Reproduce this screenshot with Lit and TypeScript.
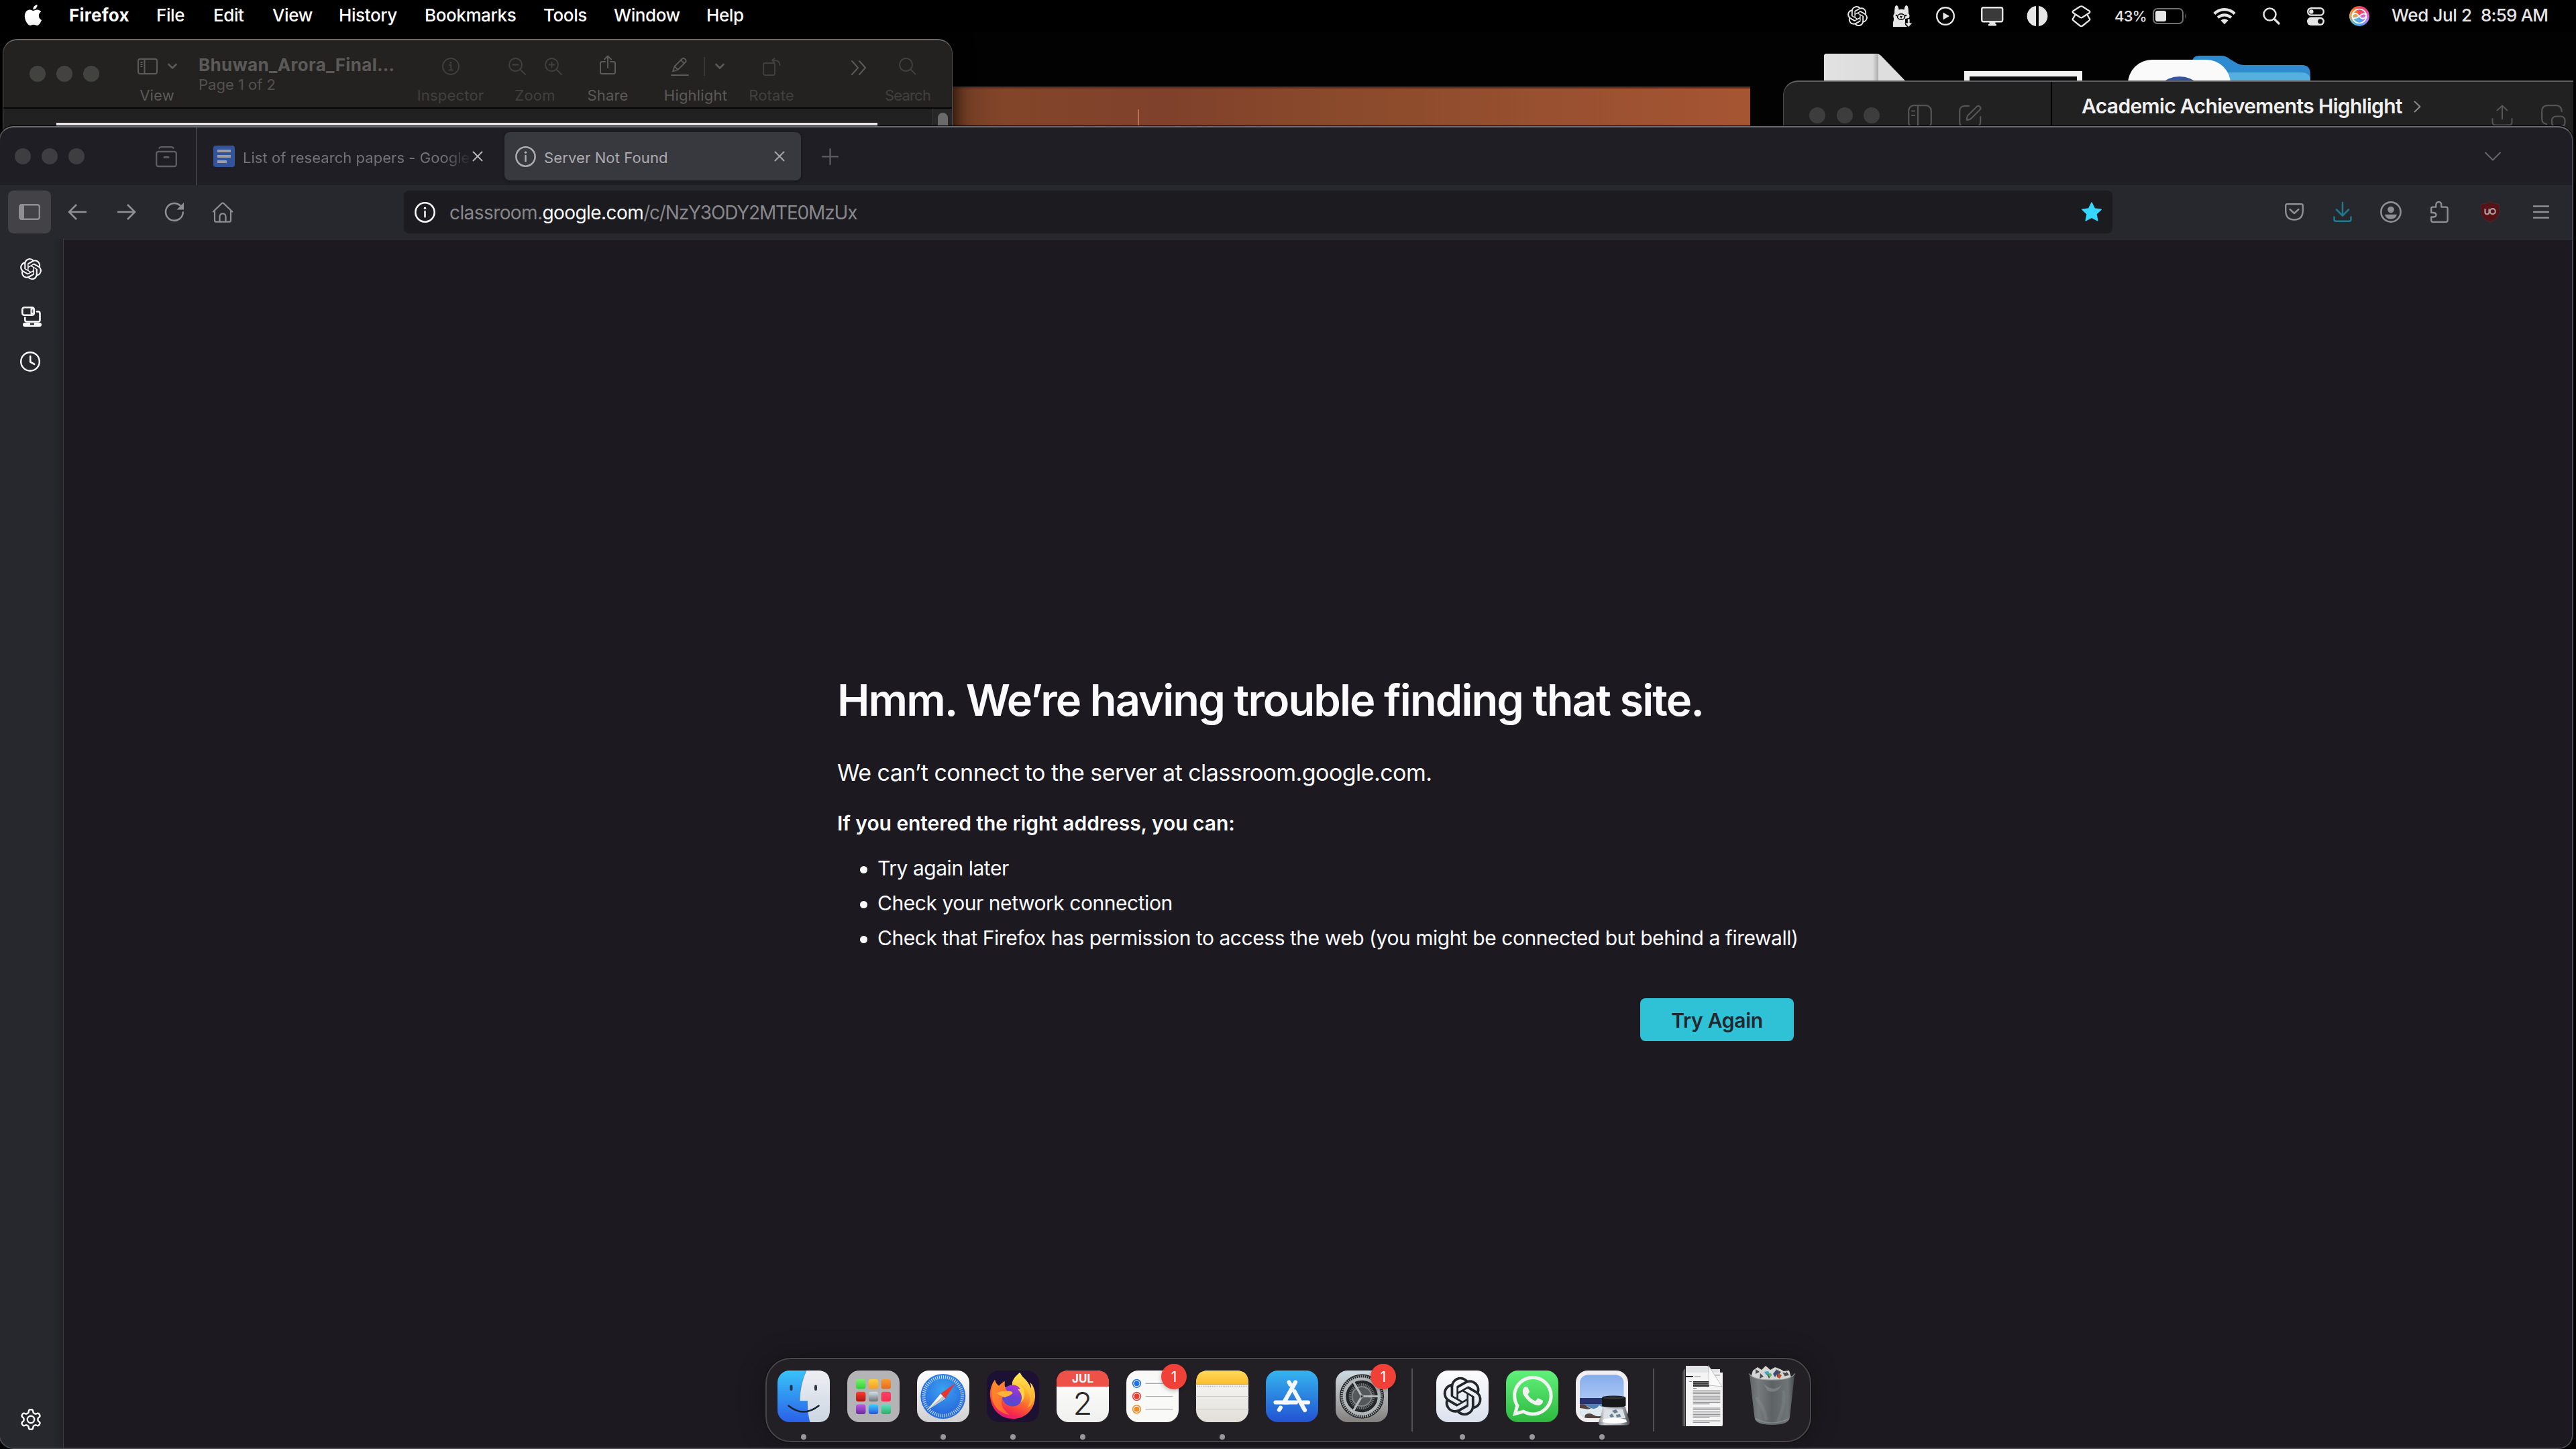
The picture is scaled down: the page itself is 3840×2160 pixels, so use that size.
import { LitElement, html, svg, css, nothing, type SVGTemplateResult, type TemplateResult } from 'lit';
import { customElement } from 'lit/decorators.js';
import { classMap } from 'lit/directives/class-map.js';

const icon = (w: number, h: number, body: SVGTemplateResult, viewBox = `0 0 ${w} ${h}`): TemplateResult =>
  html`<svg class="icon" width=${w} height=${h} viewBox=${viewBox} fill="none" stroke-linecap="round" stroke-linejoin="round">${body}</svg>`;

const APPLE = 'M12.152 6.896c-.948 0-2.415-1.078-3.96-1.04-2.04.027-3.91 1.183-4.961 3.014-2.117 3.675-.546 9.103 1.519 12.09 1.013 1.454 2.208 3.09 3.792 3.039 1.52-.065 2.09-.987 3.935-.987 1.831 0 2.35.987 3.96.948 1.637-.026 2.676-1.48 3.676-2.948 1.156-1.688 1.636-3.325 1.662-3.415-.039-.013-3.182-1.221-3.22-4.857-.026-3.04 2.48-4.494 2.597-4.559-1.429-2.09-3.623-2.324-4.39-2.376-2-.156-3.675 1.09-4.61 1.09zM15.53 3.83c.843-1.012 1.4-2.427 1.245-3.83-1.207.052-2.662.805-3.532 1.818-.78.896-1.454 2.338-1.273 3.714 1.338.104 2.715-.688 3.559-1.701z';
const KNOT = 'M22.2819 9.8211a5.9847 5.9847 0 0 0-.5157-4.9108 6.0462 6.0462 0 0 0-6.5098-2.9A6.0651 6.0651 0 0 0 4.9807 4.1818a5.9847 5.9847 0 0 0-3.9977 2.9 6.0462 6.0462 0 0 0 .7427 7.0966 5.98 5.98 0 0 0 .511 4.9107 6.051 6.051 0 0 0 6.5146 2.9001A5.9847 5.9847 0 0 0 13.2599 24a6.0557 6.0557 0 0 0 5.7718-4.2058 5.9894 5.9894 0 0 0 3.9977-2.9001 6.0557 6.0557 0 0 0-.7475-7.0729zm-9.022 12.6081a4.4755 4.4755 0 0 1-2.8764-1.0408l.1419-.0804 4.7783-2.7582a.7948.7948 0 0 0 .3927-.6813v-6.7369l2.02 1.1686a.071.071 0 0 1 .038.052v5.5826a4.504 4.504 0 0 1-4.4945 4.4944zm-9.6607-4.1254a4.4708 4.4708 0 0 1-.5346-3.0137l.142.0852 4.783 2.7582a.7712.7712 0 0 0 .7806 0l5.8428-3.3685v2.3324a.0804.0804 0 0 1-.0332.0615L9.74 19.9502a4.4992 4.4992 0 0 1-6.1408-1.6464zM2.3408 7.8956a4.485 4.485 0 0 1 2.3655-1.9728V11.6a.7664.7664 0 0 0 .3879.6765l5.8144 3.3543-2.0201 1.1685a.0757.0757 0 0 1-.071 0l-4.8303-2.7865A4.504 4.504 0 0 1 2.3408 7.872zm16.5963 3.8558L13.1038 8.364 15.1192 7.2a.0757.0757 0 0 1 .071 0l4.8303 2.7913a4.4944 4.4944 0 0 1-.6765 8.1042v-5.6772a.79.79 0 0 0-.407-.667zm2.0107-3.0231l-.142-.0852-4.7735-2.7818a.7759.7759 0 0 0-.7854 0L9.409 9.2297V6.8974a.0662.0662 0 0 1 .0284-.0615l4.8303-2.7866a4.4992 4.4992 0 0 1 6.6802 4.66zM8.3065 12.863l-2.02-1.1638a.0804.0804 0 0 1-.038-.0567V6.0742a4.4992 4.4992 0 0 1 7.3757-3.4537l-.142.0805L8.704 5.459a.7948.7948 0 0 0-.3927.6813zm1.0976-2.3654l2.602-1.4998 2.6069 1.4998v2.9994l-2.5974 1.4997-2.6067-1.4997Z';
const WHATSAPP = 'M17.472 14.382c-.297-.149-1.758-.867-2.03-.967-.273-.099-.471-.148-.67.15-.197.297-.767.966-.94 1.164-.173.199-.347.223-.644.075-.297-.15-1.255-.463-2.39-1.475-.883-.788-1.48-1.761-1.653-2.059-.173-.297-.018-.458.13-.606.134-.133.298-.347.446-.52.149-.174.198-.298.298-.497.099-.198.05-.371-.025-.52-.075-.149-.669-1.612-.916-2.207-.242-.579-.487-.5-.669-.51-.173-.008-.371-.01-.57-.01-.198 0-.52.074-.792.372-.272.297-1.04 1.016-1.04 2.479 0 1.462 1.065 2.875 1.213 3.074.149.198 2.096 3.2 5.077 4.487.709.306 1.262.489 1.694.625.712.227 1.36.195 1.871.118.571-.085 1.758-.719 2.006-1.413.248-.694.248-1.289.173-1.413-.074-.124-.272-.198-.57-.347m-5.421 7.403h-.004a9.87 9.87 0 01-5.031-1.378l-.361-.214-3.741.982.998-3.648-.235-.374a9.86 9.86 0 01-1.51-5.26c.001-5.45 4.436-9.884 9.888-9.884 2.64 0 5.122 1.03 6.988 2.898a9.825 9.825 0 012.893 6.994c-.003 5.45-4.437 9.884-9.885 9.884m8.413-18.297A11.815 11.815 0 0012.05 0C5.495 0 .16 5.335.157 11.892c0 2.096.547 4.142 1.588 5.945L.057 24l6.305-1.654a11.882 11.882 0 005.683 1.448h.005c6.554 0 11.89-5.335 11.893-11.893a11.821 11.821 0 00-3.48-8.413Z';

/** Closed outline of a soft six-toothed gear centred in a 32px box. */
const gearOutline = (): string => {
  const points: string[] = [];
  for (let i = 0; i < 120; i++) {
    const a = (i / 120) * Math.PI * 2;
    const r = 12.6 + 2.2 * Math.tanh(2.2 * Math.cos(6 * a));
    points.push(`${(16 + r * Math.sin(a)).toFixed(2)} ${(16 - r * Math.cos(a)).toFixed(2)}`);
  }
  return `M${points.join('L')}Z`;
};

const knot = (size: number, color: string) => icon(size, size, svg`<path fill=${color} d=${KNOT}/>`, '0 0 24 24');

/* ---------- menu bar ---------- */

const MENUS = ['File', 'Edit', 'View', 'History', 'Bookmarks', 'Tools', 'Window', 'Help'];
const W = '#e6e6e6';

const llama = icon(29, 33, svg`
  <path fill=${W} d="M2 12C2 4 3 0 5 0S8 3 8.500 6.500C11 5.500 14 5.500 16.500 6.500 17 3 18 0 20 0S23 4 23 12C25 14 25 17 23.500 19L18 20V29L21 32H0V25C1 23 1 21 1 19 0 17 0 14 2 12Z"/>
  <ellipse cx="12" cy="17" rx="5.500" ry="4.200" stroke="#000" stroke-width="1.600"/>
  <path d="M10.800 16.300 12 17.300l1.200-1M12 17.300v1.500" stroke="#000" stroke-width="1.400"/>
  <circle cx="5" cy="15" r="1.300" fill="#000"/><circle cx="19" cy="15" r="1.300" fill="#000"/>
  <path d="M21.500 20h3.500v6h4L23.200 32.500 17.500 26h4Z" fill=${W} stroke="#000" stroke-width=".8"/>`);
const playCircle = icon(28, 28, svg`<circle cx="14" cy="14" r="12.800" stroke=${W} stroke-width="2.400"/><path d="M10.500 8.500v11l9.500-5.500Z" fill=${W}/>`);
const display = icon(34, 29, svg`<rect x="1.200" y="1.200" width="31" height="21" rx="2.500" fill="#3a3a3a" stroke=${W} stroke-width="2.400"/><path d="M12.500 23h9v3h1.500v2.500H11V26h1.500Z" fill=${W}/>`);
const split = icon(30, 30, svg`<path fill=${W} d="M13 0A15.100 15.100 0 0 0 13 30ZM17 0A15.100 15.100 0 0 1 17 30Z"/>`);
const layers = icon(29, 33, svg`<path stroke=${W} stroke-width="2.300" d="M12.700 1.800q1.800-1 3.600 0L26.400 8.200q2 1.500 0 3L16.300 17.800q-1.800 1-3.600 0L2.600 11.200q-2-1.500 0-3ZM5.200 14.500 2.600 19.200q-2 1.700 0 3.200L12.700 30.500q1.800 1.200 3.600 0L26.400 22.400q2-1.500 0-3.200L23.800 14.500"/>`);
const battery = icon(52, 24, svg`<rect x="1" y="1" width="44" height="22" rx="6" stroke="#6f6f6f" stroke-width="2"/><rect x="4" y="4" width="16" height="16" rx="3" fill=${W}/><path d="M48.500 8.500q3 3.500 0 7Z" fill="#6f6f6f"/>`);
const wifi = icon(34, 26, svg`<g stroke=${W} stroke-width="4.200" stroke-linecap="butt"><path d="M1.800 9.500a21.500 21.500 0 0 1 30.400 0"/><path d="M7.200 15.300a14 14 0 0 1 19.600 0"/></g><path d="M11.500 19.500a8 8 0 0 1 11 0L17 25.200Z" fill=${W}/>`);
const search = icon(26, 26, svg`<g stroke=${W}><circle cx="10.500" cy="10.500" r="9" stroke-width="2.500"/><path d="m17.500 17.500 6.500 6.500" stroke-width="3.200"/></g>`);
const controls = icon(26, 27, svg`<rect x="1.200" y="1.200" width="23.600" height="10.400" rx="5.200" stroke=${W} stroke-width="2.400"/><circle cx="6.400" cy="6.400" r="3.200" fill=${W}/><rect y="14.600" width="26" height="12.400" rx="6.200" fill=${W}/><circle cx="19.800" cy="20.800" r="3.600" fill="#000"/>`);
const siri = html`<span class="siri">${icon(30, 30, svg`<g stroke="#fff" stroke-width="1.700"><circle cx="15" cy="15" r="10.500"/><path d="M5 13c5-5 8 0 11 3.500s6.500 2.500 8.500-.5M5.500 18c5 1 7.500-1 10-3.500s6-3.500 9-2"/></g>`)}</span>`;

/* ---------- Preview window ---------- */

const P = '#5b5a58';
const PD = '#41403f';
const pvSidebar = icon(30, 24, svg`<g stroke=${P} stroke-width="2"><rect x="1" y="1" width="28" height="22" rx="3"/><path d="M10.500 1v22M4.500 6h3M4.500 9h3M4.500 12h3" stroke-linecap="butt"/></g>`);
const pvChevron = icon(14, 10, svg`<path d="m1.500 2 5.500 5.500L12.500 2" stroke=${P} stroke-width="2.600"/>`);
const pvInfo = icon(26, 26, svg`<g stroke=${PD} stroke-width="1.800"><circle cx="13" cy="13" r="12"/><path d="M11 11h2.300v7.500M10.500 18.500h5.500"/></g><circle cx="12.800" cy="7.300" r="1.500" fill=${PD}/>`);
const pvZoom = (plus: boolean) => icon(26, 26, svg`<g stroke=${PD} stroke-width="1.900"><circle cx="10.500" cy="10.500" r="9.500"/><path d="m17.500 17.500 7.500 7.500M6.500 10.500h8${plus ? 'M10.500 6.500v8' : ''}"/></g>`);
const pvShare = icon(24, 30, svg`<path d="M8 10H3.500Q1 10 1 12.500v13Q1 28 3.500 28h17q2.500 0 2.500-2.500v-13Q23 10 20.500 10H16M12 19V2M7 6.500 12 1.500l5 5" stroke=${P} stroke-width="2"/>`);
const pvPencil = icon(28, 28, svg`<path d="M1 27h25" stroke=${P} stroke-width="2"/><path d="M3 21.500 5.500 14 17 2.500q1.500-1.500 3.500 0l1.500 1.500q1.500 2 0 3.500L10.500 19ZM5.500 14l5 5M15 4.500l5 5" stroke=${P} stroke-width="1.800"/>`);
const pvRotate = icon(27, 27, svg`<g stroke=${PD} stroke-width="1.900"><rect x="1" y="8" width="17" height="18" rx="2.500"/><path d="M14 4h4q7 0 7.500 7M17.500.8 14 4l3.500 3.200"/></g>`);
const pvMore = icon(24, 22, svg`<path d="m2 1 9 10-9 10M13 1l9 10-9 10" stroke=${P} stroke-width="2"/>`);
const pvSearch = icon(26, 26, svg`<g stroke=${PD} stroke-width="2"><circle cx="10.500" cy="10.500" r="9.500"/><path d="m17.500 17.500 7 7"/></g>`);

interface PreviewTool { cls: string; label?: string; icons: unknown[]; dim?: boolean }
const PREVIEW_TOOLS: PreviewTool[] = [
  { cls: 'inspector', label: 'Inspector', icons: [pvInfo], dim: true },
  { cls: 'zoom', label: 'Zoom', icons: [pvZoom(false), pvZoom(true)], dim: true },
  { cls: 'share', label: 'Share', icons: [pvShare] },
  { cls: 'highlight', label: 'Highlight', icons: [pvPencil, html`<i class="bar"></i>`, pvChevron] },
  { cls: 'rotate', label: 'Rotate', icons: [pvRotate], dim: true },
  { cls: 'spacer', icons: [] },
  { cls: 'more', icons: [pvMore] },
  { cls: 'find', label: 'Search', icons: [pvSearch], dim: true },
];

/* ---------- chat window ---------- */

const C = '#555';
const chatSidebar = icon(36, 36, svg`<g stroke=${C} stroke-width="2.200"><rect x="1.200" y="1.200" width="33.600" height="33.600" rx="8"/><path d="M15 1v34M6 9.500h4M6 16h4"/></g>`);
const chatCompose = icon(34, 36, svg`<path d="M15 2H9Q1.200 2 1.200 10v16q0 7 7 7h16q8 0 8-7v-8M12 23q-.5-5 2.500-8L27 2.800q2-1.800 4.300.2t.2 4.500L19 20q-3 3-7 3Z" stroke=${C} stroke-width="2.200"/>`);
const chatShare = icon(32, 32, svg`<path d="M16 21.500V2M8.500 8.500 16 1.500l7.500 7M1.500 21v5q0 4.500 4.500 4.500h20q4.500 0 4.500-4.500v-5" stroke=${C} stroke-width="2"/>`);
const chatPip = icon(37, 34, svg`<g stroke=${C} stroke-width="2.200"><path d="M8 29Q1.200 28 1.200 21V10q0-8.800 9-8.800h12q8 0 8.500 9"/><rect x="16" y="17.500" width="19.500" height="15.500" rx="6"/></g>`);

/* ---------- Firefox ---------- */

const F = '#8f8e94';
const fxView = icon(32, 31, svg`<g stroke="#5f5e64" stroke-width="2.300"><path d="M5.500 2.800q.5-1.700 2.500-1.700h16q2 0 2.500 1.700"/><rect x="1.200" y="8" width="29.600" height="22" rx="3"/><path d="M13 16.500h6" stroke-width="3"/></g>`);
const docsFav = icon(32, 32, svg`<rect width="32" height="32" rx="4" fill="#33549b"/><path d="M6 6h20v4H6zM6 14h20v4H6zM6 22h14v4H6z" fill="#9d9da3"/>`);
const infoIcon = (c: string, size = 31) => icon(size, size, svg`<circle cx="16" cy="16" r="14.600" stroke=${c} stroke-width="2.600"/><path d="M16 14.500V23" stroke=${c} stroke-width="2.600"/><circle cx="16" cy="9.600" r="1.800" fill=${c}/>`, '0 0 32 32');
const closeX = (c: string) => icon(16, 16, svg`<path d="m1.500 1.500 13 13m0-13-13 13" stroke=${c} stroke-width="2"/>`);
const plus = icon(25, 25, svg`<path d="M12.500 1v23M1 12.500h23" stroke="#5e5e63" stroke-width="2.200"/>`);
const tabsChevron = icon(26, 14, svg`<path d="m2 1.500 11 11 11-11" stroke="#67676c" stroke-width="2"/>`);

const fxSidebar = icon(32, 24, svg`<rect x="1.200" y="1.200" width="29.600" height="21.600" rx="3" stroke=${F} stroke-width="2.400"/><path d="M3 1h5v22H3q-2 0-2-2V3q0-2 2-2" fill=${F}/>`);
const fxBack = icon(30, 26, svg`<path d="M28 13H2M13 2 2 13l11 11" stroke=${F} stroke-width="2.600" stroke-linecap="butt" stroke-linejoin="miter"/>`);
const fxForward = icon(30, 26, svg`<path d="M2 13h26M17 2l11 11-11 11" stroke=${F} stroke-width="2.600" stroke-linecap="butt" stroke-linejoin="miter"/>`);
const fxReload = icon(30, 30, svg`<path d="M27.800 15.500A12.900 12.900 0 1 1 23.500 5.300" stroke=${F} stroke-width="2.500"/><path d="M29 1v10.500H18.500Z" fill=${F}/>`);
const fxHome = icon(32, 31, svg`<path d="M1.800 14.500 14.500 2.200q1.500-1.300 3 0L30.200 14.500M4 12.500v15q0 2.200 2.200 2.200h19.600q2.200 0 2.200-2.200v-15M11.500 29.500V22q0-4.500 4.500-4.500t4.500 4.500v7.500" stroke=${F} stroke-width="2.200"/>`);
const star = icon(34, 32, svg`<path fill="#35d6ff" stroke="#35d6ff" stroke-width="1.500" d="m17 2 4.300 8.900 9.900 1.300-7.300 6.700 1.900 9.900-8.800-4.800-8.800 4.800 1.900-9.900-7.300-6.700 9.900-1.300Z"/>`);

const pocket = icon(28, 26, svg`<path d="M3.500 1.200h21q2.300 0 2.300 2.300V11q0 13.500-12.800 13.500T1.200 11V3.500q0-2.300 2.300-2.300ZM7.500 9 14 15l6.500-6" stroke=${F} stroke-width="2.400"/>`);
const download = icon(28, 30, svg`<path d="M14 1v19M5 11.500l9 9 9-9M1.500 22.500V26q0 2.800 2.800 2.800h19.400q2.800 0 2.800-2.800v-3.500" stroke="#20788f" stroke-width="2.500"/>`);
const account = icon(32, 32, svg`<circle cx="16" cy="16" r="14.600" stroke=${F} stroke-width="2.600"/><circle cx="16" cy="12.500" r="4.800" fill=${F}/><path d="M7 19.800h18q-1.500 6.700-9 6.700t-9-6.700" fill=${F}/>`);
const extensions = icon(28, 32, svg`<path d="M2.200 17V11q0-2.300 2.300-2.300h4.800V5.500q0-4.300 4-4.300t4 4.300v3.200h7q2.300 0 2.300 2.300v17.500q0 2.300-2.300 2.300H4.500q-2.300 0-2.300-2.300V23.500h3.300q4-.5 4-3.300T5.500 17Z" stroke=${F} stroke-width="2.300"/>`);
const ublock = icon(30, 32, svg`<path d="M15 .8Q21 4.500 28.800 4.500V16q0 9.500-13.800 15.200Q1.200 25.500 1.200 16V4.500Q9 4.500 15 .8Z" fill="#561316" stroke="#3f2c31" stroke-width="1"/><path d="M7.500 11v5.200q0 3 3 3t3-3V11" stroke="#a99ba0" stroke-width="2.200" stroke-linecap="butt"/><circle cx="18.800" cy="15.200" r="4" stroke="#a99ba0" stroke-width="2.200"/>`);
const menu = icon(26, 20, svg`<path d="M2 1.500h22M2 10h22M2 18.500h22" stroke=${F} stroke-width="2.400"/>`);

const laptop = icon(32, 32, svg`<g stroke="#fbfbfe" stroke-width="2.600"><rect x="2.300" y="2.300" width="17.500" height="11.500" rx="3"/><path d="M24 8.500h2q2.500 0 2.500 2.500v10q0 2.500-2.500 2.500H9Q6.300 23.500 6.300 21v-3.500"/></g><path d="M14 2h2.500v3.500M14 14h2.500v-3.500" stroke="#fbfbfe" stroke-width="1.500"/><path fill="#fbfbfe" fill-rule="evenodd" d="M6 25h22q3 0 3 3t-3 3H6q-3 0-3-3t3-3Zm8 .8v2.500h6v-2.500ZM14.500 3.500v9h4v-9Zm2 1.700h1.200v5.600h-1.200Z"/>`);
const clock = icon(30, 30, svg`<circle cx="15" cy="15" r="13.800" stroke="#fbfbfe" stroke-width="2.400"/><path d="M15.200 7v8.500l6 3.300" stroke="#fbfbfe" stroke-width="2.600"/>`);
const gear = icon(32, 32, svg`<path d=${gearOutline()} stroke="#fbfbfe" stroke-width="2.400"/><circle cx="16" cy="16" r="5.200" stroke="#fbfbfe" stroke-width="2.400"/>`);

/* ---------- dock ---------- */

const tile = (fill: string) => svg`<rect width="78" height="77" rx="18" fill=${fill}/>`;

const finder = icon(78, 77, svg`
  <defs><linearGradient id="fi" x2="0" y2="1"><stop stop-color="#38c4f8"/><stop offset="1" stop-color="#2b60e8"/></linearGradient>
  <linearGradient id="fi2" x2="0" y2="1"><stop stop-color="#efeff3"/><stop offset="1" stop-color="#cbd6e2"/></linearGradient></defs>
  ${tile('url(#fi)')}
  <path d="M43 0H60Q78 0 78 18V59Q78 77 60 77H48.500Q45 66 44.800 45.500H33Q33.500 20 43 0Z" fill="url(#fi2)"/>
  <path d="M43 0Q33.500 20 33 45.500H44.800" stroke="#1a6fc0" stroke-opacity=".5" stroke-width="1"/>
  <rect x="18.500" y="21.500" width="4" height="8.500" rx="2" fill="#243247"/><rect x="55" y="21.500" width="4" height="8.500" rx="2" fill="#343a44"/>
  <path d="M16.500 52.500Q38.500 70.500 61.500 52.500" stroke="#16222f" stroke-width="2.500"/>`);

const PAD_COLORS = [['#7cf06a', '#2fcf3a'], ['#ffcf3e', '#f59e28'], ['#f99a2e', '#e56a22'], ['#ff3b30', '#a81a12'], ['#cfe0e8', '#6c7276'], ['#ff3f66', '#f0324e'], ['#b85ae8', '#6e2a9c'], ['#38d0fc', '#2555e0'], ['#5ee0c8', '#2fae62']];
const launchpad = icon(78, 77, svg`
  <defs>${PAD_COLORS.map(([a, b], i) => svg`<linearGradient id=${`lp${i}`} x2="0" y2="1"><stop stop-color=${a}/><stop offset="1" stop-color=${b}/></linearGradient>`)}</defs>
  ${tile('#b4b4b6')}
  ${PAD_COLORS.map((_, i) => svg`<rect x=${13 + (i % 3) * 18.800} y=${13 + Math.floor(i / 3) * 18.800} width="14.400" height="14.400" rx="3.500" fill=${`url(#lp${i})`}/>`)}`);

const safari = icon(78, 77, svg`
  <defs><linearGradient id="sf" x2="0" y2="1"><stop stop-color="#fff"/><stop offset="1" stop-color="#d0d0d2"/></linearGradient>
  <radialGradient id="sf2" cy=".35"><stop stop-color="#3aa2f0"/><stop offset="1" stop-color="#2a6fdf"/></radialGradient></defs>
  ${tile('url(#sf)')}
  <circle cx="38.800" cy="38.500" r="33.500" fill="url(#sf2)"/>
  <circle cx="38.800" cy="38.500" r="28.800" stroke="#d5e8fb" stroke-width="5" stroke-dasharray="1 2.016" stroke-linecap="butt"/>
  <path d="M57 19 35.200 34.500 42 42Z" fill="#e8362c"/><path d="M14.500 59.500 35.200 34.500 42 42Z" fill="#f4f4f4"/><path d="M14.500 59.500 38.600 38.300 42 42Z" fill="#bfc4ca"/>`);

const firefox = icon(78, 77, svg`
  <defs><linearGradient id="ff" x1=".75" y1="0" x2=".3" y2="1"><stop stop-color="#fff04a"/><stop offset=".32" stop-color="#ffb52e"/><stop offset=".6" stop-color="#fb6230"/><stop offset=".85" stop-color="#f5254f"/><stop offset="1" stop-color="#d8188a"/></linearGradient>
  <linearGradient id="ff2" x1=".7" y1="0" x2=".4" y2="1"><stop stop-color="#b235d8"/><stop offset=".55" stop-color="#6d3fd0"/><stop offset="1" stop-color="#4a4fd0"/></linearGradient>
  <linearGradient id="ff3" x1="0" y1="0" x2="1" y2="1"><stop stop-color="#ff8f2a"/><stop offset="1" stop-color="#ff5a30"/></linearGradient>
  <linearGradient id="ff4" x2="0" y2="1"><stop stop-color="#ffe94e"/><stop offset="1" stop-color="#ff9e2c"/></linearGradient></defs>
  ${tile('#1c1133')}
  <path d="M12 14C8 19 3 30 5.500 42 8 60 22 72 39 72 57 72 71 59 72 40 72.500 30 69 21 64.500 18 66 22 66.500 25 66 27 61 13 53 12 49.500 3 42 9 37 15 38 23L27 25C26 22 26.500 19 26.500 16 22 19 19 22 18 23 14.500 20 13 18 12 14Z" fill="url(#ff)"/>
  <circle cx="38.500" cy="37.500" r="16" fill="url(#ff2)"/>
  <path d="M38 22C40 19 47 22 50 28 47.500 27.500 46 28 46 28 52 33 54 41 50 48 57 43 58 33 54 26 50 20 43 17 38 22Z" fill="#ffd23e"/>
  <path d="M12 14C9 22 6 32 8 43 11 55 20 64 34 66 26 60 21 53 22 45 22 40 25 38 28 39 33 39 36 36 38.500 33.500 37 30 33 30.500 31 31 29 28 27 26 27 25 26 22 26.500 19 26.500 16 22 19 19 22 18 23 14.500 20 13 18 12 14Z" fill="url(#ff3)"/>
  <path d="M14 34C20 30 27 31 31 31 35 30.500 38 31.500 38.500 33.500 35 38 31 37.500 27 40 20 38 18 35 14 34Z" fill="#ffb43a"/>
  <path d="M56 24C66 34 67 46 60 56 68 52 72 44 71 34 70 28 68 22 64.500 18 66 22 66.500 25 66 27 60 14 53 12 49.500 3 42 9 37 15 38 22 46 17 53 21 56 24Z" fill="url(#ff4)"/>`);

const calendar = icon(78, 77, svg`
  <defs><linearGradient id="cl" x2="0" y2="1"><stop stop-color="#fff"/><stop offset="1" stop-color="#f0f0ee"/></linearGradient></defs>
  ${tile('url(#cl)')}<path d="M0 24V18Q0 0 18 0H60Q78 0 78 18V24Z" fill="#ee5148"/>
  <text x="39" y="18.300" class="cal-month">JUL</text><text x="39" y="65.500" class="cal-day">2</text>`);

const reminders = icon(78, 77, svg`
  ${tile('#f9f9f8')}
  ${['#1f6ff2', '#f2382f', '#ef8b25'].map((c, i) => svg`<circle cx="15.500" cy=${19.300 + i * 19.200} r="5.900" stroke=${c} stroke-width="1.500"/><circle cx="15.500" cy=${19.300 + i * 19.200} r="3.900" fill=${c}/><path d=${`M29 ${19.300 + i * 19.200}h40`} stroke="#a9abaf" stroke-width="1.200"/>`)}`);

const notes = icon(78, 77, svg`
  <defs><linearGradient id="nt" x2="0" y2="1"><stop stop-color="#ffda5c"/><stop offset="1" stop-color="#fabd2c"/></linearGradient>
  <linearGradient id="nt2" x2="0" y2="1"><stop stop-color="#fafafa"/><stop offset="1" stop-color="#e2dfd8"/></linearGradient></defs>
  ${tile('url(#nt2)')}<path d="M0 20V18Q0 0 18 0H60Q78 0 78 18V20Z" fill="url(#nt)"/>
  <path d="M0 20.500h78" stroke="#a9a08a" stroke-width="1"/><path d="M2 23.500h75" stroke="#b5b3af" stroke-width="1.400" stroke-dasharray="1.200 1.500" stroke-linecap="butt"/>
  <path d="M0 38.500h78M0 58h78" stroke="#cccbca" stroke-width="1.200"/>`);

const appStore = icon(78, 77, svg`
  <defs><linearGradient id="as" x2="0" y2="1"><stop stop-color="#34b4ee"/><stop offset="1" stop-color="#2352d2"/></linearGradient></defs>
  ${tile('url(#as)')}
  <g stroke="#f4f7fb" stroke-width="6.200"><path d="M14.500 47.500h18M54.500 47.500h8.500"/><path d="M44 17.500 27 47.500h18M34.500 17.500l2 3.500M42.500 31 58 59M21.800 55.500 20 58.500"/></g>`);

const settings = icon(78, 77, svg`
  <defs><linearGradient id="ss" x2="0" y2="1"><stop stop-color="#cddbe2"/><stop offset=".6" stop-color="#a6a8a8"/><stop offset="1" stop-color="#83807d"/></linearGradient></defs>
  ${tile('url(#ss)')}
  <circle cx="39" cy="38.500" r="33" fill="#232527"/>
  <circle cx="39" cy="38.500" r="29.700" stroke="#a3a8aa" stroke-width="4" stroke-dasharray="1.500 1.610" stroke-linecap="butt"/>
  <circle cx="39" cy="38.500" r="26" stroke="#b0b5b7" stroke-width="4.500"/>
  <circle cx="39" cy="38.500" r="17.500" stroke="#6d7173" stroke-width="4" stroke-dasharray="1.500 1.200" stroke-linecap="butt"/>
  <circle cx="39" cy="38.500" r="14.500" fill="#55585a" stroke="#808486" stroke-width="2"/>
  <path d="M39 38.500h25M39 38.500 26.500 17M39 38.500 26.500 60" stroke="#b5babc" stroke-width="3.200"/>
  <circle cx="39" cy="38.500" r="3" fill="#8b8f91"/>
  <circle cx="39" cy="38.500" r="1.200" fill="#222"/>`);

const chatgpt = icon(78, 77, svg`
  <defs><linearGradient id="cg" x2="0" y2="1"><stop stop-color="#fdfdfe"/><stop offset="1" stop-color="#dbe2ee"/></linearGradient></defs>
  ${tile('url(#cg)')}<path transform="translate(10.300 9.700) scale(2.400)" fill="#22272b" d=${KNOT}/>`);

const whatsapp = icon(78, 77, svg`
  <defs><linearGradient id="wa" x2="0" y2="1"><stop stop-color="#60f27a"/><stop offset="1" stop-color="#2eb83f"/></linearGradient></defs>
  ${tile('url(#wa)')}<path transform="translate(9.800 8) scale(2.500)" fill="#f1f3f1" d=${WHATSAPP}/>`);

const preview = icon(78, 77, svg`
  <defs><linearGradient id="pv" x2="0" y2="1"><stop stop-color="#7fa8ea"/><stop offset="1" stop-color="#a9c6f3"/></linearGradient>
  <linearGradient id="pv2" x2="1"><stop stop-color="#7d8186"/><stop offset=".2" stop-color="#dfe1e3"/><stop offset=".7" stop-color="#b9bdc1"/><stop offset="1" stop-color="#45494d"/></linearGradient>
  <clipPath id="pvc"><rect x="6" y="6.500" width="65.500" height="64.500" rx="12"/></clipPath></defs>
  <rect width="78" height="77" rx="18" fill="#f0eef0"/>
  <g clip-path="url(#pvc)"><path d="M0 0h78v42H0z" fill="url(#pv)"/><path d="M0 41h78v12H0z" fill="#26336f"/><path d="M0 50h78v28H0z" fill="#4f83b8"/>
  <path d="M5 55q8-5 16 0t14-3l8 4v16H5z" fill="#dfe9f0"/><path d="M6 51q6-2 10 2t8 2q-4 4-10 2l-8-1zM14 66q6-4 12 0t14 1v8H12z" fill="#54423c"/></g>
  <path d="M40 54h34q1 5 4 15l2.500 8q.5 4-5 4.500h-37q-6 0-4.500-5l3-8q2.500-8 3-14.500Z" fill="url(#pv2)" fill-opacity=".93"/>
  <path d="M44 58h26l4 13H41z" fill="#dce2e7"/><path d="m54 60 6-2 3 4-5 2zM50 67l4-3 3 5-5 1zM60 66l6-1 1 4-6 1z" fill="#6b7f95"/><path d="M40 73q17-5 35 0l1 4q-18 4-36 0Z" fill="#fff"/>
  <path d="M39 41q0-3.500 17.500-3.500T74.500 41v11q0 3-17.700 3T39 52Z" fill="#17181a"/><ellipse cx="56.800" cy="40.500" rx="16" ry="2.200" fill="#2f3133"/>`);

const textLines = (x: number, y: number, w: number, n: number, gap: number) =>
  Array.from({ length: n }, (_, i) => svg`<path d=${`M${x} ${y + i * gap}h${w - (i === n - 1 ? w * 0.4 : 0)}`} stroke="#8b8b8d" stroke-width="1"/>`);
const documents = icon(62, 92, svg`
  <defs><linearGradient id="dc" x2="1"><stop stop-color="#222"/><stop offset="1" stop-color="#777"/></linearGradient></defs>
  <path d="M6 1h32l6 5h13v20H6z" fill="#e3e4e5"/><path d="M0 11 5 5v86H0z" fill="url(#dc)"/>
  <path d="M6 11h55v78q0 2-2 2H6z" fill="#f4f4f5"/>
  <path d="M6 17h11" stroke="#222" stroke-width="2" stroke-linecap="butt"/><path d="M19 17h9M46 15h11M11 24.500h4M17 34.500h5" stroke="#888" stroke-width="1.200" stroke-linecap="butt"/>
  <path d="M17 25h24M17 28h23M17 31h24" stroke="#222" stroke-width="2" stroke-linecap="butt"/>
  ${textLines(17, 38, 40, 10, 2.200)}${textLines(17, 64, 40, 7, 2.400)}${textLines(17, 83, 40, 2, 2.400)}
  <path d="M40 1 60 32q-8-1-19-2Z" fill="#fafafa" stroke="#b5b5b5" stroke-width=".8"/>`);

const trash = icon(69, 90, svg`
  <defs><linearGradient id="tr" x2="1"><stop stop-color="#5f6466"/><stop offset=".2" stop-color="#777b7d"/><stop offset=".5" stop-color="#5d6264"/><stop offset=".85" stop-color="#6f7476"/><stop offset="1" stop-color="#45494b"/></linearGradient></defs>
  <path d="M3 18 6 8l7-5 6 4 6-6 7 6 7-4 8 3 5 3 8-1 3 10-9 5H12Z" fill="#d5d5d4"/>
  <path d="m10 6 6 4-6 3zM26 12l8 2-4 6zM40 6l8 4-6 8zM50 11l8 1-4 5zM17 12l5 5-6 3zM56 9l4 6-5 1z" fill="#4a4c50"/><path d="m23 10 6-1 2 4-5 2z" fill="#35a8c8"/><path d="m29 13 4-1 1 4-4 1z" fill="#58b65a"/><path d="m44 12 5 3-3 5-4-2z" fill="#b8502c"/><path d="m36 13 4-5 3 3-4 7z" fill="#344a80"/>
  <path d="M.8 13Q6 22 34.500 22T68.200 13L61 78q-1.500 11-26.500 11T8.500 78Z" fill="url(#tr)"/>
  <path d="M.8 13Q6 22 34.500 22T68.200 13" stroke="#9ba0a2" stroke-width="1.200"/>
  <path d="M22 28q16 14 28 0-8 16-22 10" fill="#a3a7a9" fill-opacity=".4"/>
  <path d="M12 50q10 12 14 30M52 40q2 20-8 42" stroke="#a3a7a9" stroke-opacity=".18" stroke-width="5"/>
  <path d="M10 80q24 12 49 0" stroke="#a0a4a6" stroke-opacity=".5" stroke-width="1.500"/>`);

interface DockItem { art: TemplateResult; running?: boolean; badge?: string }
const DOCK_MAIN: DockItem[] = [
  { art: finder, running: true }, { art: launchpad }, { art: safari, running: true }, { art: firefox, running: true },
  { art: calendar, running: true }, { art: reminders, badge: '1' }, { art: notes, running: true }, { art: appStore }, { art: settings, badge: '1' },
];
const DOCK_RECENT: DockItem[] = [{ art: chatgpt, running: true }, { art: whatsapp, running: true }, { art: preview, running: true }];

const TIPS = ['Try again later', 'Check your network connection', 'Check that Firefox has permission to access the web (you might be connected but behind a firewall)'];

@customElement('app-root')
export class AppRoot extends LitElement {
  static styles = css`
    :host { display: block; font-family: Inter, "Liberation Sans", sans-serif; }
    * { box-sizing: border-box; }
    .icon { display: block; flex: none; overflow: visible; }
    .desktop { position: relative; width: 3840px; height: 2160px; overflow: hidden; background: #020202; white-space: nowrap; }

    .menubar { display: flex; height: 48px; padding-left: 36px; justify-content: space-between; background: #000; color: #fff; font-size: 26px; font-weight: 500; line-height: 45px; letter-spacing: -0.4px; }
    .menus { display: grid; grid-template-columns: 67px 130px 85px 88px 99px 128px 177px 105px 138px 80px; }
    .apple { padding-top: 7px; }
    .app-name { font-weight: 700; letter-spacing: 0.25px; }
    .status { display: grid; grid-template-columns: 68px 64px 67px 69px 66px 64px 57px 90px 74px 66px 63px 63px 133px 142px; color: #e6e6e6; }
    .status .icon { align-self: center; }
    .pct { font-size: 22px; letter-spacing: -0.7px; line-height: 48px; }
    .time { letter-spacing: -0.8px; }
    .siri { align-self: center; width: 30px; height: 30px; border-radius: 50%; background: conic-gradient(#f0405a, #ee4a94 60deg, #c57cf2 110deg, #4aa4f4 170deg, #5ab4dc 220deg, #e8a850 280deg, #f4722f 325deg, #f0405a); }

    .photo { position: absolute; left: 1400px; top: 129px; width: 1209px; height: 70px; background: linear-gradient(90deg, #6a3a24, #834529 8%, #7f412b 28%, #8a4a2b 50%, #985030 75%, #a65532); border-top: 3px solid #5c3325; }
    .scratch { position: absolute; left: 1696px; top: 163px; width: 2px; height: 26px; background: #b56f52; }
    .paper { position: absolute; left: 2719px; top: 80px; }
    .shot { position: absolute; left: 2928px; top: 106px; width: 176px; height: 40px; background: #0a0a0c; border: 8px solid #f3f3f3; border-bottom: 0; }
    .folder { position: absolute; left: 3268px; top: 83px; }
    .rounded { position: absolute; left: 3172px; top: 89px; width: 153px; height: 80px; border-radius: 36px 36px 0 0; background: #fafafa; overflow: hidden; }
    .rounded::after { content: ""; display: block; width: 84px; height: 84px; margin: 25px auto 0; border-radius: 50%; background: #3453a0; }

    .lights { display: flex; gap: 16px; }
    .lights i { width: 24px; height: 24px; border-radius: 50%; background: var(--light); }

    .preview { --light: #42423f; position: absolute; left: 4px; top: 58px; width: 1416px; height: 160px; border: 1.5px solid #585755; border-top: 2px solid #6b6a69; border-radius: 22px 22px 0 0; background: #212121; overflow: hidden; box-shadow: 0 0 30px #000; }
    .pv-bar { display: grid; grid-template-columns: 184px 90px 324px 137px 115px 102px 160px 66px 60px 74px 72px; height: 102px; background: #232220; border-bottom: 2px solid #060606; color: #5b5a58; font-size: 22px; line-height: 28px; }
    .pv-bar .lights { padding: 38px 0 0 39px; }
    .pv-tool { display: flex; flex-direction: column; align-items: center; padding-top: 23px; gap: 13px; letter-spacing: 0.2px; }
    .pv-tool.dim { color: #41403f; }
    .pv-icons { display: flex; height: 32px; align-items: center; justify-content: center; gap: 15px; }
    .zoom .pv-icons { gap: 28px; }
    .share .icon { margin-top: -4px; }
    .find { letter-spacing: -0.8px; }
    .more .icon { margin-top: 4px; }
    .highlight { padding-left: 6px; }
    .highlight span { margin-left: -6px; }
    .bar { width: 2px; height: 28px; margin-left: 6px; background: #383735; }
    .pv-title { padding: 21px 0 0 17px; }
    .pv-title b { display: block; font-size: 26px; line-height: 32px; letter-spacing: 0.35px; font-weight: 700; }
    .pv-title span { display: block; line-height: 28px; margin-top: -1px; color: #525150; }
    .pv-page { display: flex; justify-content: space-between; height: 60px; padding-left: 79px; }
    .pv-sheet { width: 1224px; height: 40px; margin-top: 21px; background: #e9e4e8; }
    .pv-scroll { width: 30px; padding: 6px 6px 0 8px; border-left: 1px solid #333; background: #272727; }
    .pv-scroll::after { content: ""; display: block; height: 60px; border-radius: 8px; background: #6a6a6a; }

    .chat { --light: #3d3d3d; position: absolute; left: 2658px; top: 120px; width: 1178px; height: 130px; display: grid; grid-template-columns: 400px 1fr; border: 1.5px solid #4c4c4c; border-top: 2px solid #626262; border-right: 0; border-radius: 22px 0 0 0; background: #212121; overflow: hidden; }
    .chat-side { display: flex; padding: 34px 0 0 38px; border-right: 2px solid #000; }
    .chat-side .lights { gap: 16.500px; padding-top: 4px; }
    .chat-side > .icon { margin-left: 42px; }
    .chat-side > .icon + .icon { margin-left: 40px; }
    .chat-main { display: flex; color: #f0f0f0; padding-left: 44px; }
    .chat-title { width: 495px; font-size: 30px; font-weight: 600; line-height: 40px; padding-top: 16px; letter-spacing: -0.65px; }
    .chat-title small { display: block; font-size: 22px; font-weight: 400; line-height: 30px; margin-top: 5px; color: #8a8a8a; letter-spacing: 0; }
    .chat-main > .icon { margin-top: 28px; }
    .chat-main > .icon.icon ~ .icon { margin: 34px 0 0 42px; }
    .chat-gap { width: 62px; }

    .firefox { --light: #3e3d42; position: absolute; left: -2px; top: 188px; width: 3838px; height: 1972px; display: flex; flex-direction: column; border: 2px solid #4b4a50; border-top-color: #6a696f; border-radius: 22px; background: #1f1e24; overflow: hidden; box-shadow: 0 0 0 1px #000; }
    .tabs { display: flex; height: 86px; flex: none; align-items: center; font-size: 22px; letter-spacing: 0.05px; }
    .tabs > .lights { padding-left: 22px; width: 232px; }
    .tab-sep { width: 2px; height: 86px; margin: 0 24px 0 28px; background: #3f3e44; }
    .tab-title { padding: 3px 0 0 12px; line-height: 30px; }
    .tab { display: flex; align-items: center; height: 72px; border-radius: 8px; color: #737279; }
    .tab.docs { width: 416px; margin-right: 18px; }
    .docs .tab-title { width: 354px; -webkit-mask-image: linear-gradient(90deg, #000 88%, transparent 100%); mask-image: linear-gradient(90deg, #000 88%, transparent 100%); }
    .tab.active { width: 442px; padding: 0 24px 0 16px; background: #38383f; color: #acabb0; box-shadow: 0 1px 4px #0006; }
    .active .tab-title { flex: 1; letter-spacing: 0.12px; }
    .plus { margin-left: 31px; }
    .list-tabs { margin-left: auto; padding-right: 105px; }

    .toolbar { display: flex; height: 80px; flex: none; padding: 8px 0 0 12px; background: #27282d; }
    .btns { display: flex; flex: none; gap: 8px; }
    .btn { display: flex; width: 64px; height: 64px; align-items: center; justify-content: center; border-radius: 8px; }
    .btn.on { background: #424247; }
    .url { display: flex; flex: none; align-items: center; width: 2547px; height: 64px; margin: 0 239px 0 238px; padding: 0 14px 0 16px; border-radius: 8px; background: #1c1b1f; font-size: 28px; color: #88878d; }
    .addr { flex: 1; padding: 2px 0 0 21px; line-height: 40px; letter-spacing: -0.58px; }
    .addr b { font-weight: 400; color: #fbfbfe; }
    .addr .path { letter-spacing: -1.180px; }
    .btn.wide { margin-left: 4px; }

    .body { display: flex; flex: 1; min-height: 0; background: #27282d; }
    .sidebar { display: flex; flex-direction: column; align-items: center; width: 94px; padding: 29px 2px 26px 0; background: linear-gradient(90deg, #27282d 84%, #222227); }
    .sidebar > :nth-child(2) { margin: 39px 0 36px 2px; }
    .sidebar > :nth-child(3) { margin-right: 2px; }
    .sidebar > :last-child { margin-top: auto; }
    .page { flex: 1; padding: 647px 0 0 1153px; border-top: 1px solid #3a393f; border-left: 1px solid #3a393f; background: #1c1a20; color: #fbfbfe; }
    h1 { margin: 0 0 46px; font-size: 65px; font-weight: 600; line-height: 80px; letter-spacing: -1.920px; }
    p { margin: 0 0 33px; font-size: 34px; line-height: 44px; letter-spacing: -0.560px; }
    .hint { display: block; margin-bottom: 21px; font-size: 30px; font-weight: 600; line-height: 40px; letter-spacing: -0.060px; }
    ul { margin: 0 0 64px; padding: 0; list-style: none; font-size: 30px; line-height: 52px; letter-spacing: -0.460px; }
    li { display: flex; align-items: center; gap: 15px; padding-left: 34px; }
    li::before { content: ""; width: 11px; height: 11px; margin-top: 4px; border-radius: 50%; background: #fbfbfe; }
    .retry { display: block; width: 229px; height: 64px; margin-left: 1197px; padding: 2px 0 0; border: 0; border-radius: 8px; background: #2fc1d6; color: #25272e; font: 600 30px/62px Inter, sans-serif; letter-spacing: -0.300px; text-align: center; }

    .dock { position: absolute; left: 1141px; top: 2024px; width: 1559px; height: 126px; display: flex; gap: 26px; padding: 17px 0 0 16px; border: 2px solid #47464a; border-radius: 38px; background: #222025; box-shadow: 0 0 0 1px #0d0c10, 0 0 40px #0005; }
    .app { position: relative; display: flex; flex-direction: column; align-items: center; width: 78px; }
    .app .icon { margin-bottom: 18px; }
    .dot { width: 8px; height: 8px; border-radius: 50%; background: #98979a; }
    .badge { position: absolute; left: 52px; top: -10px; width: 38px; height: 38px; border-radius: 50%; background: #ef4138; color: #fff; font-size: 21px; line-height: 39px; text-align: center; box-shadow: 0 2px 6px #0004; }
    .dock hr { width: 2px; height: 94px; margin: -3px 9px 0; border: 0; background: #4f4e52; }
    .dock hr.last { margin: -3px 15px 0 11px; }
    .stack { margin-top: -8px; }
    .trash { margin: -8px 0 0 12px; }
    .cal-month { font: 700 17px Inter, sans-serif; fill: #fff; text-anchor: middle; }
    .cal-day { font: 300 47px Inter, sans-serif; fill: #2a2a2a; text-anchor: middle; }
  `;

  private lights() {
    return html`<div class="lights"><i></i><i></i><i></i></div>`;
  }

  private menubar() {
    return html`<header class="menubar">
      <nav class="menus">
        <span class="apple">${icon(27, 31, svg`<path fill="#fff" d=${APPLE}/>`, '1.8 0 20.5 24')}</span>
        <span class="app-name">Firefox</span>
        ${MENUS.map((m) => html`<span>${m}</span>`)}
      </nav>
      <div class="status">
        ${knot(30, W)}${llama}${playCircle}${display}${split}${layers}
        <span class="pct">43%</span>${battery}${wifi}${search}${controls}${siri}
        <span>Wed Jul 2</span><span class="time">8:59 AM</span>
      </div>
    </header>`;
  }

  private wallpaper() {
    return html`
      <div class="photo"></div><div class="scratch"></div>
      <div class="paper">${icon(122, 60, svg`<defs><linearGradient id="pp" x2="1"><stop stop-color="#e2e2e2"/><stop offset=".9" stop-color="#dcdcdc"/><stop offset="1" stop-color="#aaa"/></linearGradient></defs><path d="M0 60V4Q0 0 4 0H78Q82 0 85 3L140 60Z" fill="#dedede"/><path d="M0 60V4Q0 0 4 0H78L81 2V60Z" fill="url(#pp)"/>`)}</div>
      <div class="shot"></div>
      <div class="folder">${icon(176, 60, svg`<path d="M0 60V10Q0 0 10 0H42Q50 0 56 5L66 11Q71 14 78 14H164Q176 14 176 28V60Z" fill="#2f8bd0"/><path d="M0 25H162Q176 25 176 37V60H0Z" fill="#55b0e0"/>`)}</div>
      <div class="rounded"></div>`;
  }

  private previewWindow() {
    return html`<section class="preview">
      <div class="pv-bar">
        ${this.lights()}
        <div class="pv-tool"><div class="pv-icons">${pvSidebar}${pvChevron}</div><span>View</span></div>
        <div class="pv-title"><b>Bhuwan_Arora_Final…</b><span>Page 1 of 2</span></div>
        ${PREVIEW_TOOLS.map((t) => html`<div class=${classMap({ 'pv-tool': true, [t.cls]: true, dim: !!t.dim })}>
          <div class="pv-icons">${t.icons}</div>${t.label ? html`<span>${t.label}</span>` : nothing}
        </div>`)}
      </div>
      <div class="pv-page"><div class="pv-sheet"></div><div class="pv-scroll"></div></div>
    </section>`;
  }

  private chatWindow() {
    return html`<section class="chat">
      <div class="chat-side">${this.lights()}${chatSidebar}${chatCompose}</div>
      <div class="chat-main">
        <div class="chat-title">Academic Achievements Highlight<small>Plus</small></div>
        ${icon(12, 18, svg`<path d="m1.500 1.500 8 7.500-8 7.500" stroke="#8a8a8a" stroke-width="2"/>`)}
        <div class="chat-gap"></div>${chatShare}${chatPip}
      </div>
    </section>`;
  }

  private firefoxWindow() {
    return html`<main class="firefox">
      <div class="tabs">
        ${this.lights()}${fxView}<i class="tab-sep"></i>
        <div class="tab docs">${docsFav}<span class="tab-title">List of research papers - Google</span>${closeX('#b5b5b8')}</div>
        <div class="tab active">${infoIcon('#acabb0')}<span class="tab-title">Server Not Found</span>${closeX('#a5a4aa')}</div>
        <span class="plus">${plus}</span>
        <span class="list-tabs">${tabsChevron}</span>
      </div>
      <div class="toolbar">
        <div class="btns">
          <span class="btn on">${fxSidebar}</span>
          ${[fxBack, fxForward, fxReload, fxHome].map((i) => html`<span class="btn">${i}</span>`)}
        </div>
        <div class="url">${infoIcon('#fbfbfe')}<span class="addr">classroom.<b>google.com</b><span class="path">/c/NzY3ODY2MTE0MzUx</span></span>${star}</div>
        <div class="btns">
          ${[pocket, download, account, extensions].map((i) => html`<span class="btn">${i}</span>`)}
          <span class="btn wide">${ublock}</span><span class="btn wide">${menu}</span>
        </div>
      </div>
      <div class="body">
        <aside class="sidebar">${knot(32, '#fbfbfe')}${laptop}${clock}${gear}</aside>
        <article class="page">
          <h1>Hmm. We’re having trouble finding that site.</h1>
          <p>We can’t connect to the server at classroom.google.com.</p>
          <strong class="hint">If you entered the right address, you can:</strong>
          <ul>${TIPS.map((t) => html`<li>${t}</li>`)}</ul>
          <button class="retry">Try Again</button>
        </article>
      </div>
    </main>`;
  }

  private dockItem(item: DockItem) {
    return html`<div class="app">${item.art}${item.running ? html`<i class="dot"></i>` : nothing}${item.badge ? html`<span class="badge">${item.badge}</span>` : nothing}</div>`;
  }

  render() {
    return html`<div class="desktop">
      ${this.menubar()}${this.wallpaper()}${this.previewWindow()}${this.chatWindow()}${this.firefoxWindow()}
      <div class="dock">
        ${DOCK_MAIN.map((i) => this.dockItem(i))}<hr />
        ${DOCK_RECENT.map((i) => this.dockItem(i))}<hr class="last" />
        <div class="stack">${documents}</div><div class="trash">${trash}</div>
      </div>
    </div>`;
  }
}
